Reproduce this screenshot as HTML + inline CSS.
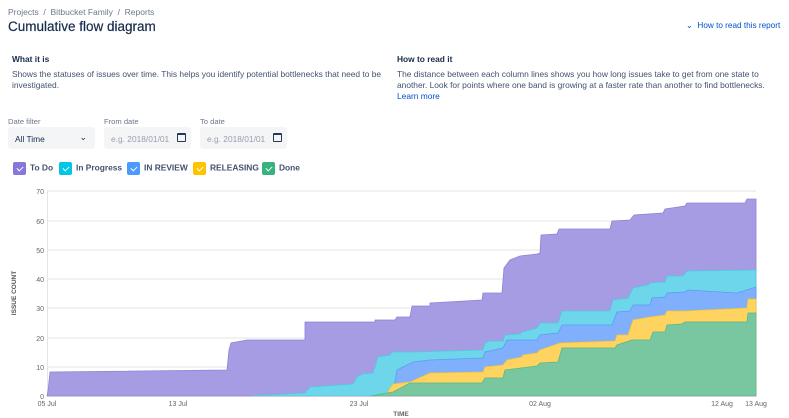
<!DOCTYPE html>
<html><head><style>
*{margin:0;padding:0;box-sizing:border-box}
body{width:789px;height:418px;background:#fff;font-family:"Liberation Sans",sans-serif;color:#172b4d;position:relative;overflow:hidden}
.a{position:absolute;white-space:nowrap}
.t{font-size:8.4px;color:#42526e}
.lbl{font-size:7.6px;color:#6b778c}
.inp{position:absolute;top:127px;height:22px;width:87px;background:#f4f5f7;border-radius:3px;font-size:8.4px;padding:7px 7px;color:#97a0af}
.cb{display:inline-block;width:13px;height:13px;border-radius:2px;vertical-align:middle;margin-right:4px;position:relative}
.cb:after{content:"";position:absolute;left:4.5px;top:2.5px;width:3px;height:5px;border:solid #fff;border-width:0 1.3px 1.3px 0;transform:rotate(45deg)}
.lg{position:absolute;top:162px;font-size:8.4px;font-weight:bold;color:#42526e}
</style></head><body>
<div class="a" style="left:8px;top:7px;font-size:8.5px;color:#6b778c">Projects &nbsp;/&nbsp; Bitbucket Family &nbsp;/&nbsp; Reports</div>
<div class="a" style="left:8px;top:19px;font-size:13.5px;color:#172b4d;-webkit-text-stroke:0.2px #172b4d">Cumulative flow diagram</div>
<div class="a" style="left:686px;top:20px;font-size:8.2px;color:#0052cc">&#8964;&nbsp; How to read this report</div>
<div class="a" style="left:12px;top:54px;font-size:8.4px;font-weight:bold">What it is</div>
<div class="a t" style="left:12px;top:69px;line-height:11px">Shows the statuses of issues over time. This helps you identify potential bottlenecks that need to be<br>investigated.</div>
<div class="a" style="left:397px;top:54px;font-size:8.4px;font-weight:bold">How to read it</div>
<div class="a t" style="left:397px;top:69px;line-height:11px">The distance between each column lines shows you how long issues take to get from one state to<br>another. Look for points where one band is growing at a faster rate than another to find bottlenecks.<br><span style="color:#0052cc">Learn more</span></div>
<div class="a lbl" style="left:8px;top:117px">Date filter</div>
<div class="a lbl" style="left:104px;top:117px">From date</div>
<div class="a lbl" style="left:200px;top:117px">To date</div>
<div class="inp" style="left:8px;color:#172b4d">All Time<span style="position:absolute;right:8px;top:5px;font-size:9px">&#8964;</span></div>
<div class="inp" style="left:104px">e.g. 2018/01/01<span style="position:absolute;right:5px;top:6px;width:9px;height:9px;border:1.3px solid #253858;border-top-width:2.5px;border-radius:1px"></span></div>
<div class="inp" style="left:200px">e.g. 2018/01/01<span style="position:absolute;right:5px;top:6px;width:9px;height:9px;border:1.3px solid #253858;border-top-width:2.5px;border-radius:1px"></span></div>
<div class="lg" style="left:13px"><span class="cb" style="background:#8777d9"></span>To Do</div>
<div class="lg" style="left:59px"><span class="cb" style="background:#00c7e6"></span>In Progress</div>
<div class="lg" style="left:127px"><span class="cb" style="background:#4c9aff"></span>IN REVIEW</div>
<div class="lg" style="left:193px"><span class="cb" style="background:#ffc400"></span>RELEASING</div>
<div class="lg" style="left:262px"><span class="cb" style="background:#36b37e"></span>Done</div>
<svg class="a" style="left:0;top:0" width="789" height="418" font-family="Liberation Sans, sans-serif">
<g stroke="#e4e4e4" stroke-width="1">
<line x1="47" x2="756" y1="191" y2="191"/><line x1="47" x2="756" y1="221" y2="221"/><line x1="47" x2="756" y1="250" y2="250"/><line x1="47" x2="756" y1="279" y2="279"/><line x1="47" x2="756" y1="308" y2="308"/><line x1="47" x2="756" y1="338" y2="338"/><line x1="47" x2="756" y1="367" y2="367"/>
<line x1="47.5" x2="47.5" y1="191" y2="396"/>
</g>
<g font-size="7" fill="#666" text-anchor="end">
<text x="44" y="194">70</text><text x="44" y="224">60</text><text x="44" y="253">50</text><text x="44" y="282">40</text><text x="44" y="311">30</text><text x="44" y="341">20</text><text x="44" y="370">10</text><text x="44" y="399">0</text>
</g>
<g font-size="7" fill="#666" text-anchor="middle">
<text x="47" y="406">05 Jul</text><text x="178" y="406">13 Jul</text><text x="359" y="406">23 Jul</text><text x="540" y="406">02 Aug</text><text x="722" y="406">12 Aug</text><text x="756" y="406">13 Aug</text>
<text x="401" y="416" font-size="6.5" font-weight="bold">TIME</text>
</g>
<text transform="translate(16,293) rotate(-90)" font-size="6.5" font-weight="bold" fill="#555" text-anchor="middle">ISSUE COUNT</text>
<polygon fill="#a59ce3" stroke="#8e83d6" stroke-width="0.8" points="47,396 48,391 50,372 227,370 229,350 231,343 247,340 305,340 305,322 375,322 375,320 395,320 397,317 410,317 412,306 430,306 430,303 482,300 483,293 502,293 504,268 510,260 520,256 537,254 540,253 541,235 557,234 559,229 610,229 612,221 630,220 634,215 663,213 665,209 685,206 687,203 745,203 747,199 756,199 756,396"/>
<polygon fill="#6dd6ea" stroke="#4fc9e0" stroke-width="0.8" points="250,396 305,393 310,387 353,384 357,377 362,374 373,373 375,367 378,357 390,355 392,352 412,352 483,350 485,343 490,341 503,341 505,335 520,334 522,332 537,328 540,323 558,323 562,311 610,311 613,300 628,298 633,288 648,285 650,283 665,282 667,276 683,276 687,271 756,270 756,396"/>
<polygon fill="#80b0fb" stroke="#5e9af5" stroke-width="0.8" points="380,396 393,393 397,370 413,362 430,360 483,358 485,352 503,348 507,340 537,340 540,335 558,333 562,325 612,325 617,312 630,311 633,305 650,305 652,298 665,297 667,293 685,292 688,290 737,293 756,287 756,396"/>
<polygon fill="#fed360" stroke="#f5c23c" stroke-width="0.8" points="385,396 393,384 410,382 430,373 483,372 485,367 503,365 507,360 522,357 523,355 537,353 540,350 560,343 615,341 617,335 628,335 633,320 650,317 665,315 667,311 685,311 747,308 748,299 756,299 756,396"/>
<polygon fill="#79c7a0" stroke="#5ab887" stroke-width="0.8" points="370,396 393,392 410,383 482,383 485,378 503,378 505,370 537,366 540,363 558,362 562,348 615,348 617,345 632,340 650,340 653,332 665,332 667,325 682,324 685,322 747,322 748,313 756,313 756,396"/>
<line x1="47" x2="756" y1="396.5" y2="396.5" stroke="#ccd" stroke-width="1"/>
</svg>
</body></html>
